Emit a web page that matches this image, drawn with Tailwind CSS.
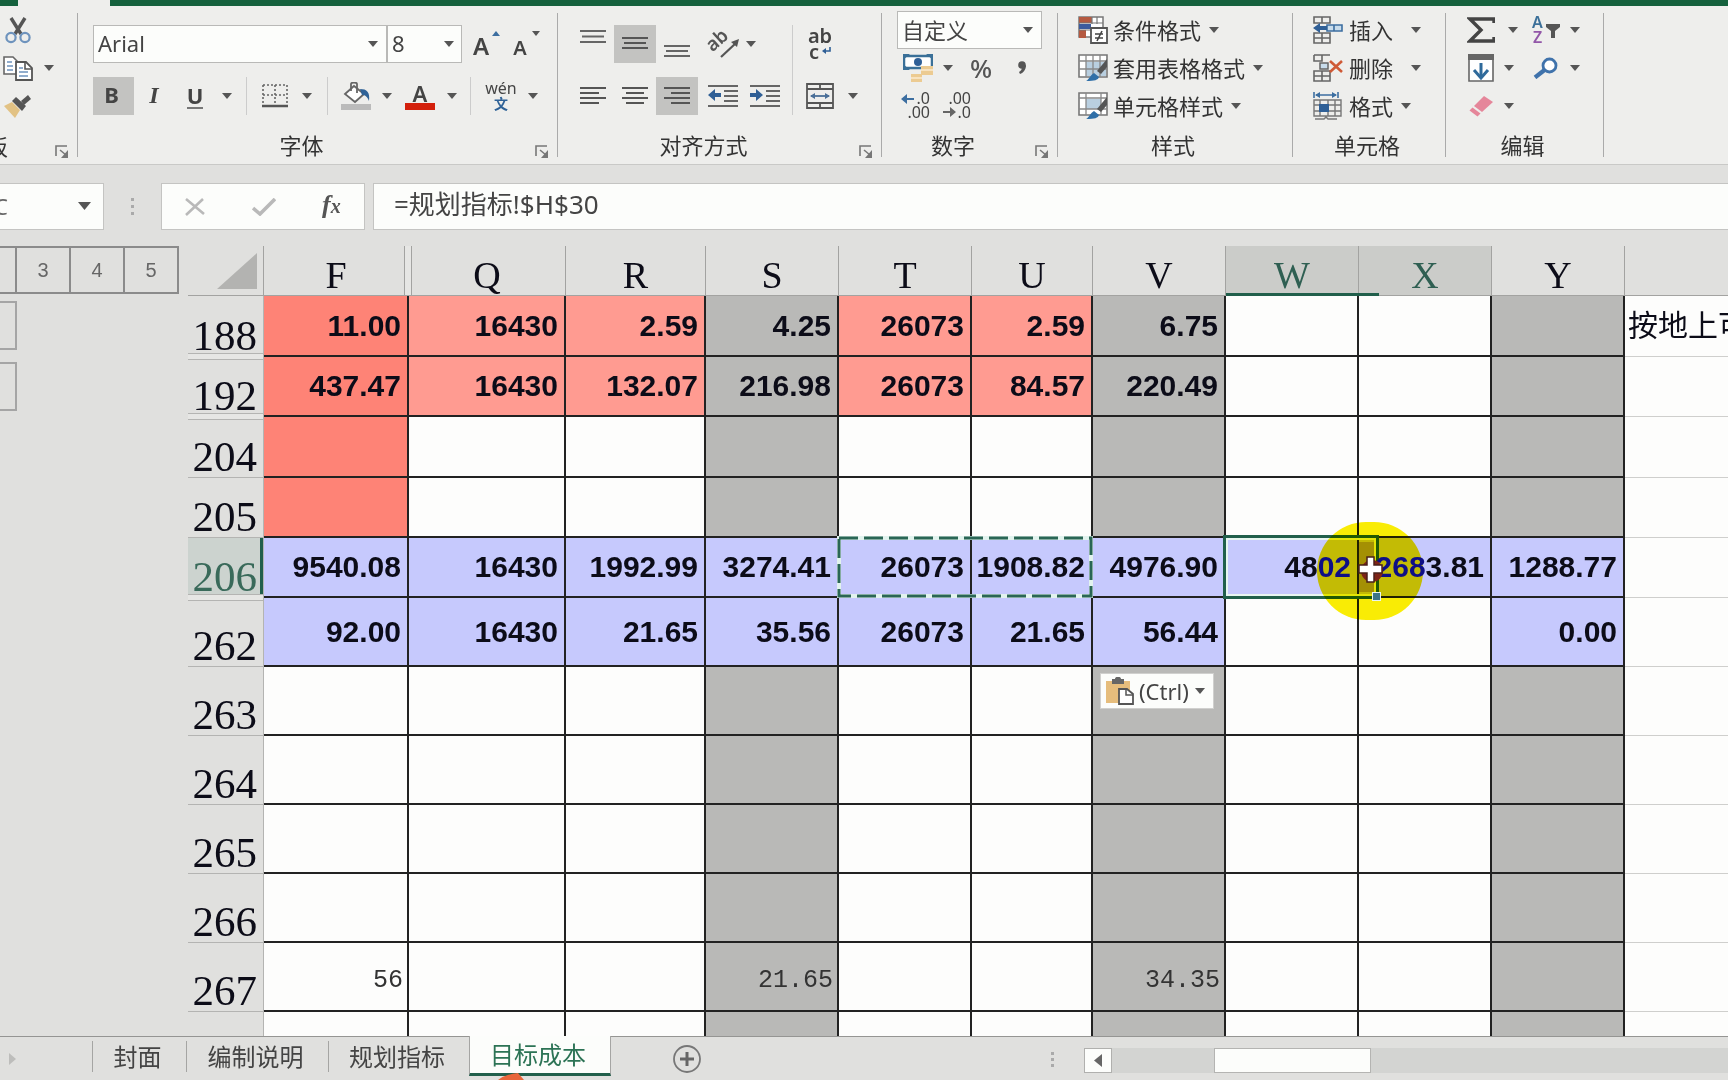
<!DOCTYPE html>
<html lang="zh-CN">
<head>
<meta charset="utf-8">
<title>目标成本</title>
<script src="https://cdn.jsdelivr.net/npm/@tailwindcss/browser@4"></script>
</head>
<body class="flex h-screen flex-col overflow-hidden bg-[#e0e0de] font-['Noto_Sans','Noto_Sans_CJK_SC',sans-serif] text-[22px] text-[#444]">

<svg class="hidden">
  <symbol id="caret" viewBox="0 0 10 6"><path d="M0 0h10L5 6z" fill="#555"/></symbol>
  <symbol id="launcher" viewBox="0 0 14 13"><path d="M1 11V1h11" fill="none" stroke="#777" stroke-width="1.6"/><path d="M5 5l6 5" stroke="#777" stroke-width="1.6"/><path d="M13 5v8H6z" fill="#777"/></symbol>
  <symbol id="stylebrush" viewBox="0 0 30 28"><path d="M29 5v8l-6 7-4-3z" fill="#555"/><path d="M8 27c3-1 4-6 8-8l5 4c-1 3-4 4-13 4z" fill="#2f6fa8"/></symbol>
</svg>

<!-- Title strip with the open ribbon tab -->
<div class="flex h-[6px] shrink-0 bg-[#15613d]"><div class="ml-[18px] w-[92px] bg-[#eeeeec]"></div></div>

<!-- Ribbon -->
<header class="flex h-[159px] shrink-0 border-b border-[#c9c9c7] bg-[#eeeeec] [&_button]:flex [&_button]:shrink-0 [&_button]:items-center [&_button]:justify-center">

  <section class="relative flex w-[77px] shrink-0 flex-col overflow-hidden pt-[5px]">
    <div class="flex h-[38px]"><button class="w-9" aria-label="剪切"><svg width="26" height="28" viewBox="0 0 26 28"><path d="M6 2l10 16M20 2L10 18" stroke="#555" stroke-width="3.4"/><circle cx="6" cy="21.500" r="4.600" fill="none" stroke="#6e93bd" stroke-width="2.200"/><circle cx="20" cy="21.500" r="4.600" fill="none" stroke="#6e93bd" stroke-width="2.200"/></svg></button></div>
    <div class="flex h-[38px]"><button class="w-9" aria-label="复制"><svg width="30" height="26" viewBox="0 0 30 26"><path d="M1 2h9l4 4v13H1z" fill="#fff" stroke="#666" stroke-width="1.600"/><path d="M4 7h5M4 11h6M4 15h6" stroke="#6e93bd" stroke-width="1.500"/><path d="M13 7h10l6 6v12H13z" fill="#fff" stroke="#555" stroke-width="1.800"/><path d="M22 7v7h7" fill="none" stroke="#555" stroke-width="1.600"/><path d="M16 13h4M16 17h9M16 21h9" stroke="#6e93bd" stroke-width="1.500"/></svg></button><button class="w-[26px]" aria-label="复制选项"><svg class="h-[6px] w-[10px]"><use href="#caret"/></svg></button></div>
    <div class="flex h-[38px]"><button class="w-9" aria-label="格式刷"><svg width="30" height="26" viewBox="0 0 30 26"><path d="M1 13l8-4 8 8-5 8z" fill="#e2c284"/><path d="M9 8l4-4 10 9-4 5z" fill="#555"/><path d="M18 8l7-6 3 4-7 6z" fill="#555"/></svg></button></div>
    <div class="mt-auto flex h-9 w-2 items-center justify-end whitespace-nowrap text-[#333]"><span class="shrink-0">剪贴板</span></div>
    <button class="absolute right-2 bottom-[6px]" aria-label="剪贴板设置"><svg class="h-[13px] w-[14px]"><use href="#launcher"/></svg></button>
  </section>
  <div class="my-[7px] w-px shrink-0 bg-[#aaa]"></div>

  <section class="relative flex w-[479px] shrink-0 flex-col pt-[19px]">
    <div class="flex h-[38px] pl-[15px]">
      <label class="relative block w-[294px]"><select aria-label="字体" class="h-full w-full appearance-none border border-[#b9b9b7] bg-[#fcfdfb] pb-[2px] pl-1"><option>Arial</option></select><svg class="pointer-events-none absolute top-4 right-[9px] h-[6px] w-[10px]"><use href="#caret"/></svg></label>
      <label class="relative block w-[75px]"><select aria-label="字号" class="h-full w-full appearance-none border border-[#b9b9b7] bg-[#fcfdfb] pb-[2px] pl-1"><option>8</option></select><svg class="pointer-events-none absolute top-4 right-2 h-[6px] w-[10px]"><use href="#caret"/></svg></label>
      <button class="relative w-[42px] pt-1 pr-1 text-2xl font-semibold" aria-label="增大字号">A<svg class="absolute top-[6px] right-1 h-[5px] w-[8px]" viewBox="0 0 8 5"><path d="M0 5h8L4 0z" fill="#3c6ea0"/></svg></button>
      <button class="relative w-[36px] pt-2 pr-1 text-xl font-semibold" aria-label="减小字号">A<svg class="absolute top-[6px] right-0 h-[5px] w-[8px]"><use href="#caret"/></svg></button>
    </div>
    <div class="mt-[14px] flex h-[38px] pl-[15px]">
      <button class="w-[41px] bg-[#c3c3c1] pr-1 pb-[3px] font-bold">B</button>
      <button class="w-10 pb-[2px] font-['Liberation_Serif',serif] text-2xl font-bold italic">I</button>
      <button class="w-[42px]"><span class="border-b-2 border-[#777] leading-6 font-bold">U</span></button>
      <button class="w-[22px]" aria-label="下划线选项"><svg class="h-[6px] w-[10px]"><use href="#caret"/></svg></button>
      <div class="mx-2 w-px bg-[#ccc]"></div>
      <button class="w-10" aria-label="边框"><svg width="26" height="24" viewBox="0 0 26 24"><path d="M1 1h24M1 11h24M1 1v20M13 1v20M25 1v20" stroke="#666" stroke-width="1.600" stroke-dasharray="2 2"/><path d="M0 22h26" stroke="#555" stroke-width="2.500"/></svg></button>
      <button class="w-6" aria-label="边框选项"><svg class="h-[6px] w-[10px]"><use href="#caret"/></svg></button>
      <div class="mx-2 w-px bg-[#ccc]"></div>
      <button class="w-10" aria-label="填充颜色"><svg width="30" height="28" viewBox="0 0 30 28"><path d="M4 12l9-8 10 8-9 8z" fill="#fff" stroke="#666" stroke-width="1.800"/><path d="M10 9V2c0-2 6-2 6 0v9" fill="none" stroke="#666" stroke-width="1.800"/><path d="M19 7c7 0 10 3 9 12-2-5-4-6-7-6z" fill="#2f6297"/><path d="M0 22h30v6H0z" fill="#bbb"/></svg></button>
      <button class="w-[22px]" aria-label="填充选项"><svg class="h-[6px] w-[10px]"><use href="#caret"/></svg></button>
      <button class="w-11 flex-col" aria-label="字体颜色"><span class="text-[22px] leading-5 font-semibold">A</span><span class="h-[7px] w-[30px] bg-[#d3200c]"></span></button>
      <button class="w-5" aria-label="字体颜色选项"><svg class="h-[6px] w-[10px]"><use href="#caret"/></svg></button>
      <div class="mx-2 w-px bg-[#ccc]"></div>
      <button class="w-11 flex-col"><span class="text-base leading-4">wén</span><span class="text-sm leading-4 font-bold text-[#2f6297]">文</span></button>
      <button class="w-5" aria-label="拼音选项"><svg class="h-[6px] w-[10px]"><use href="#caret"/></svg></button>
    </div>
    <div class="mt-auto flex h-9 items-center justify-center pr-8 pb-[2px] text-[#333]">字体</div>
    <button class="absolute right-2 bottom-[6px]" aria-label="字体设置"><svg class="h-[13px] w-[14px]"><use href="#launcher"/></svg></button>
  </section>
  <div class="my-[7px] w-px shrink-0 bg-[#aaa]"></div>

  <section class="relative flex w-[323px] shrink-0 flex-col pt-[19px]">
    <div class="flex h-[90px] pl-[14px]">
      <div class="flex flex-col gap-[14px]">
        <div class="flex h-[38px]">
          <button class="w-[42px]" aria-label="顶端对齐"><svg width="26" height="28" viewBox="0 0 26 28"><path d="M0 1h26M2 6.500h22M0 12h26" stroke="#666" stroke-width="2"/></svg></button>
          <button class="w-[42px] bg-[#c3c3c1]" aria-label="垂直居中"><svg width="26" height="28" viewBox="0 0 26 28"><path d="M0 8h26M2 13h22M0 18h26" stroke="#555" stroke-width="2"/></svg></button>
          <button class="w-[42px]" aria-label="底端对齐"><svg width="26" height="28" viewBox="0 0 26 28"><path d="M0 16h26M2 21h22M0 26h26" stroke="#666" stroke-width="2"/></svg></button>
          <button class="ml-1 w-[42px]" aria-label="方向"><svg class="overflow-visible" width="34" height="30" viewBox="0 0 34 30"><text x="4" y="23" transform="rotate(-42 6 20)" font-family="Noto Sans" font-size="19" font-weight="600" fill="#555">ab</text><path d="M15 28L30 14" stroke="#555" stroke-width="2.200"/><path d="M33 10l-2 8-6-5z" fill="#555"/></svg></button>
          <button class="w-[14px]" aria-label="方向选项"><svg class="h-[6px] w-[10px]"><use href="#caret"/></svg></button>
        </div>
        <div class="flex h-[38px]">
          <button class="w-[42px]" aria-label="左对齐"><svg width="26" height="20" viewBox="0 0 26 20"><path d="M0 2h26M0 7h19M0 12h26M0 17h19" stroke="#555" stroke-width="2"/></svg></button>
          <button class="w-[42px]" aria-label="居中"><svg width="26" height="20" viewBox="0 0 26 20"><path d="M0 2h26M4 7h18M0 12h26M4 17h18" stroke="#555" stroke-width="2"/></svg></button>
          <button class="w-[42px] bg-[#c3c3c1]" aria-label="右对齐"><svg width="26" height="20" viewBox="0 0 26 20"><path d="M0 2h26M7 7h19M0 12h26M7 17h19" stroke="#555" stroke-width="2"/></svg></button>
          <button class="ml-1 w-[42px]" aria-label="减少缩进量"><svg width="30" height="24" viewBox="0 0 30 24"><path d="M0 2h30M16 7h14M16 12h14M16 17h14M0 22h30" stroke="#666" stroke-width="1.800"/><path d="M0 11l7-6v4h6v4H7v4z" fill="#2f5f96"/></svg></button>
          <button class="w-[42px]" aria-label="增加缩进量"><svg width="30" height="24" viewBox="0 0 30 24"><path d="M0 2h30M16 7h14M16 12h14M16 17h14M0 22h30" stroke="#666" stroke-width="1.800"/><path d="M13 11L6 5v4H0v4h6v4z" fill="#2f5f96"/></svg></button>
        </div>
      </div>
      <div class="ml-[6px] w-px bg-[#ccc]"></div>
      <div class="flex flex-col gap-[14px]">
        <div class="flex h-[38px]"><button class="relative w-[54px] flex-col text-xl leading-4 font-semibold" aria-label="自动换行"><span>ab</span><span class="mr-3">c</span><svg class="absolute right-4 bottom-2 h-[8px] w-[9px]" viewBox="0 0 9 8"><path d="M8 0v4H3" fill="none" stroke="#2f5f96" stroke-width="1.600"/><path d="M0 4l4-3v6z" fill="#2f5f96"/></svg></button></div>
        <div class="flex h-[38px]"><button class="w-[54px]" aria-label="合并后居中"><svg width="28" height="26" viewBox="0 0 28 26"><path d="M1 1h26v24H1zM1 6h26M1 20h26M14 1v5M14 20v5" fill="none" stroke="#555" stroke-width="1.800"/><path d="M5 13h18" stroke="#4a6f98" stroke-width="1.800"/><path d="M4 13l5-3v6zM24 13l-5-3v6z" fill="#4a6f98"/></svg></button><button class="w-3" aria-label="合并选项"><svg class="h-[6px] w-[10px]"><use href="#caret"/></svg></button></div>
      </div>
    </div>
    <div class="mt-auto flex h-9 items-center justify-center pr-8 pb-[2px] text-[#333]">对齐方式</div>
    <button class="absolute right-2 bottom-[6px]" aria-label="对齐设置"><svg class="h-[13px] w-[14px]"><use href="#launcher"/></svg></button>
  </section>
  <div class="my-[7px] w-px shrink-0 bg-[#aaa]"></div>

  <section class="relative flex w-[175px] shrink-0 flex-col pt-[5px] pl-[15px]">
    <label class="relative block h-[38px] w-[145px]"><select aria-label="数字格式" class="h-full w-full appearance-none border border-[#b9b9b7] bg-[#fcfdfb] pl-1"><option>自定义</option></select><svg class="pointer-events-none absolute top-4 right-[9px] h-[6px] w-[10px]"><use href="#caret"/></svg></label>
    <div class="flex h-[38px]">
      <button class="w-[42px]" aria-label="会计数字格式"><svg width="30" height="28" viewBox="0 0 30 28"><path d="M1 2h28v12H1z" fill="#fff" stroke="#3a7098" stroke-width="2.500"/><path d="M0 0h7L0 6zM30 0h-7l7 6zM0 16v-6l7 6z" fill="#3a7098"/><circle cx="15" cy="8" r="4" fill="#2f5f96"/><path d="M18 12h12v9H18zM8 20h11v8H8z" fill="#eccb92"/><path d="M18 16h12M8 24h11" stroke="#fbeccf" stroke-width="1.300"/></svg></button>
      <button class="w-[18px]" aria-label="会计格式选项"><svg class="h-[6px] w-[10px]"><use href="#caret"/></svg></button>
      <button class="w-12 text-[26px] font-medium text-[#555]">%</button>
      <button class="w-[34px]" aria-label="千位分隔"><svg width="10" height="14" viewBox="0 0 10 14"><circle cx="5" cy="4" r="3.800" fill="#555"/><path d="M9 4c0 5-3 8-6 9l-1-2c2-1 3-3 3-5z" fill="#555"/></svg></button>
    </div>
    <div class="flex h-[38px]">
      <button class="w-[38px]" aria-label="增加小数位数"><svg class="overflow-visible" width="30" height="28" viewBox="0 0 30 28"><path d="M0 7l6-5v4h7v2H6v4z" fill="#3c6ea0"/><text x="29" y="12" text-anchor="end" font-family="Noto Sans" font-size="16" fill="#444">.0</text><text x="29" y="26" text-anchor="end" font-family="Noto Sans" font-size="16" fill="#444">.00</text></svg></button>
      <button class="w-11" aria-label="减少小数位数"><svg class="overflow-visible" width="30" height="28" viewBox="0 0 30 28"><path d="M14 20l-6-5v4H1v2h7v4z" fill="#666"/><text x="29" y="12" text-anchor="end" font-family="Noto Sans" font-size="16" fill="#444">.00</text><text x="29" y="26" text-anchor="end" font-family="Noto Sans" font-size="16" fill="#444">.0</text></svg></button>
    </div>
    <div class="mt-auto flex h-9 items-center justify-center pr-12 pb-[2px] text-[#333]">数字</div>
    <button class="absolute right-2 bottom-[6px]" aria-label="数字设置"><svg class="h-[13px] w-[14px]"><use href="#launcher"/></svg></button>
  </section>
  <div class="my-[7px] w-px shrink-0 bg-[#aaa]"></div>

  <section class="flex w-[234px] shrink-0 flex-col items-start pt-[5px] text-[#333]">
    <button class="ml-5 h-[38px]"><svg width="30" height="28" viewBox="0 0 30 28"><path d="M1 1h24v20H1z" fill="#fff" stroke="#777" stroke-width="1.500"/><path d="M1 1h13v6H1zM1 14h7v8H1z" fill="#b55a41"/><path d="M1 8h12v5H1z" fill="#3d5c9e"/><path d="M14 1v7M19 1v7M1 7h24M1 14h12" stroke="#777" stroke-width="1.200"/><path d="M13 12h16v15H13z" fill="#fff" stroke="#555" stroke-width="1.800"/><path d="M17 18h8M17 22h8M24 15l-5 10" stroke="#444" stroke-width="1.600"/></svg><span class="ml-[5px]">条件格式</span><svg class="ml-2 h-[6px] w-[10px]"><use href="#caret"/></svg></button>
    <button class="ml-5 h-[38px]"><svg width="30" height="28" viewBox="0 0 30 28"><path d="M1 1h28v22H1z" fill="#fff" stroke="#777" stroke-width="1.600"/><path d="M8 8h20v14H8z" fill="#b9cfe0"/><path d="M1 7h28M1 15h28M8 1v22M15 1v22M22 1v22" stroke="#888" stroke-width="1.300"/><use href="#stylebrush"/></svg><span class="ml-[5px]">套用表格格式</span><svg class="ml-2 h-[6px] w-[10px]"><use href="#caret"/></svg></button>
    <button class="ml-5 h-[38px]"><svg width="30" height="28" viewBox="0 0 30 28"><path d="M1 1h28v22H1z" fill="#fff" stroke="#777" stroke-width="1.600"/><path d="M8 7h15v10H8z" fill="#b9cfe0"/><path d="M1 6h28M1 17h28M8 1v22M23 1v22" stroke="#888" stroke-width="1.300"/><use href="#stylebrush"/></svg><span class="ml-[5px]">单元格样式</span><svg class="ml-2 h-[6px] w-[10px]"><use href="#caret"/></svg></button>
    <div class="mt-auto flex h-9 w-full items-center justify-center pr-1 pb-[2px]">样式</div>
  </section>
  <div class="my-[7px] w-px shrink-0 bg-[#aaa]"></div>

  <section class="flex w-[152px] shrink-0 flex-col items-start pt-[5px] text-[#333]">
    <button class="ml-5 h-[38px]"><svg width="30" height="28" viewBox="0 0 30 28"><path d="M1 1h16v6H1zM9 1v6M1 17h16v10H1zM9 17v10M1 22h16" fill="none" stroke="#666" stroke-width="1.600"/><path d="M14 9h15v6H14zM21 9v6" fill="#c8dcec" stroke="#3c6ea0" stroke-width="1.600"/><path d="M0 12l7-5v3h7v4H7v3z" fill="#2f5f96"/></svg><span class="ml-[6px]">插入</span><svg class="ml-[18px] h-[6px] w-[10px]"><use href="#caret"/></svg></button>
    <button class="ml-5 h-[38px]"><svg width="30" height="28" viewBox="0 0 30 28"><path d="M1 1h16M1 1v6h8V1M1 17h16v10H1zM9 17v10M1 22h16" fill="none" stroke="#666" stroke-width="1.600"/><path d="M7 9h8v6H7z" fill="#c8dcec" stroke="#666" stroke-width="1.500"/><path d="M17 7l12 11M29 7L17 18" stroke="#cf5a36" stroke-width="2.600"/></svg><span class="ml-[6px]">删除</span><svg class="ml-[18px] h-[6px] w-[10px]"><use href="#caret"/></svg></button>
    <button class="ml-5 h-[38px]"><svg width="30" height="28" viewBox="0 0 30 28"><path d="M1 0v6M25 0v6M3 3h20" stroke="#3c6ea0" stroke-width="1.600"/><path d="M2 3l5-3v6zM24 3l-5-3v6z" fill="#3c6ea0"/><path d="M1 8h27v16H1zM1 13h27M1 19h27M7 8v16M15 8v16M22 8v16M2 27h9l2-2 2 2h9" fill="none" stroke="#777" stroke-width="1.400"/><path d="M6 12h10v8H6z" fill="#2f5f96"/></svg><span class="ml-[6px]">格式</span><svg class="ml-2 h-[6px] w-[10px]"><use href="#caret"/></svg></button>
    <div class="mt-auto flex h-9 w-full items-center justify-center pr-1 pb-[2px]">单元格</div>
  </section>
  <div class="my-[7px] w-px shrink-0 bg-[#aaa]"></div>

  <section class="flex w-[157px] shrink-0 flex-col pt-[5px] text-[#333]">
    <div class="flex h-[38px] pl-[14px]">
      <button class="w-[42px]" aria-label="自动求和"><svg width="28" height="26" viewBox="0 0 28 26"><path d="M27 6V2H3l11 11L3 24h24v-4" fill="none" stroke="#444" stroke-width="3.400"/></svg></button>
      <button class="w-[22px]" aria-label="求和选项"><svg class="h-[6px] w-[10px]"><use href="#caret"/></svg></button>
      <button class="w-11" aria-label="排序和筛选"><svg class="overflow-visible" width="30" height="28" viewBox="0 0 30 28"><text x="1" y="12" font-family="Noto Sans" font-size="16" font-weight="600" fill="#3c7099">A</text><text x="2" y="27" font-family="Noto Sans" font-size="16" font-weight="600" fill="#9257a8">Z</text><path d="M15 8h14v3l-5 4v7h-4v-7l-5-4z" fill="#555"/></svg></button>
      <button class="w-[14px]" aria-label="排序选项"><svg class="h-[6px] w-[10px]"><use href="#caret"/></svg></button>
    </div>
    <div class="flex h-[38px] pl-[14px]">
      <button class="w-[42px]" aria-label="填充"><svg width="26" height="28" viewBox="0 0 26 28"><path d="M1 1h24v26H1z" fill="#fff" stroke="#666" stroke-width="1.600"/><path d="M0 0h26v6H0z" fill="#666"/><path d="M13 9v13" stroke="#2f6a9b" stroke-width="3"/><path d="M6 16l7 8 7-8" fill="none" stroke="#2f6a9b" stroke-width="3"/></svg></button>
      <button class="w-[22px] pr-2" aria-label="填充方式"><svg class="h-[6px] w-[10px]"><use href="#caret"/></svg></button>
      <button class="w-11" aria-label="查找和选择"><svg width="26" height="22" viewBox="0 0 26 22"><circle cx="16.500" cy="8.500" r="6.500" fill="#fff" stroke="#3f72ab" stroke-width="2.800"/><path d="M11.500 13L2 20.500" stroke="#3f72ab" stroke-width="4.200"/></svg></button>
      <button class="w-[14px]" aria-label="查找选项"><svg class="h-[6px] w-[10px]"><use href="#caret"/></svg></button>
    </div>
    <div class="flex h-[38px] pl-[14px]">
      <button class="w-[42px]" aria-label="清除"><svg width="26" height="22" viewBox="0 0 26 22"><path d="M16 1l9 6-11 10-8-6z" fill="#e5869a"/><path d="M4.500 12.500l8 6-3 3-8-6z" fill="#e5869a"/></svg></button>
      <button class="w-[22px] pr-2" aria-label="清除选项"><svg class="h-[6px] w-[10px]"><use href="#caret"/></svg></button>
    </div>
    <div class="mt-auto flex h-9 items-center justify-center pr-1 pb-[2px]">编辑</div>
  </section>
  <div class="my-[7px] w-px shrink-0 bg-[#aaa]"></div>
</header>

<!-- Formula bar -->
<div class="flex h-[65px] shrink-0 pt-[18px]">
  <div class="relative h-[47px] w-[104px] shrink-0 overflow-hidden border border-l-0 border-[#c4c4c2] bg-[#fcfdfb]">
    <div class="flex h-full w-2 items-center justify-end text-[#666]"><span class="shrink-0">C</span></div>
    <button class="absolute top-[18px] right-3" aria-label="名称列表"><svg class="h-[8px] w-[13px]"><use href="#caret"/></svg></button>
  </div>
  <div class="flex h-[47px] w-[57px] shrink-0 flex-col items-center justify-center gap-1"><i class="size-[3px] bg-[#aaa]"></i><i class="size-[3px] bg-[#aaa]"></i><i class="size-[3px] bg-[#aaa]"></i></div>
  <div class="flex h-[47px] w-[204px] shrink-0 items-center justify-around border border-[#c4c4c2] bg-[#fcfdfb]">
    <button aria-label="取消"><svg width="20" height="18" viewBox="0 0 20 18"><path d="M1 1l18 15M18 1L1 17" stroke="#b9b9b9" stroke-width="2.600"/></svg></button>
    <button aria-label="输入"><svg width="24" height="18" viewBox="0 0 24 18"><path d="M1 10l7 6L23 1" fill="none" stroke="#b9b9b9" stroke-width="3.600"/></svg></button>
    <button class="pb-1 font-['Liberation_Serif',serif] text-[26px] font-bold text-[#555] italic" aria-label="插入函数">f<span class="text-xl">x</span></button>
  </div>
  <input aria-label="公式" value="=规划指标!$H$30" class="ml-2 h-[47px] min-w-0 flex-1 border border-r-0 border-[#c4c4c2] bg-[#fcfdfb] pb-[7px] pl-5 text-[26px]">
</div>

<!-- Worksheet -->
<main class="flex min-h-0 flex-1 overflow-hidden pt-4">
  <aside class="w-[188px] shrink-0 font-['Liberation_Sans',sans-serif] text-xl text-[#666]">
    <div class="flex h-12">
      <div class="w-[17px] border-2 border-l-0 border-[#8b8b8b]"></div>
      <button class="w-[54px] border-2 border-l-0 border-[#8b8b8b]">3</button>
      <button class="w-[54px] border-2 border-l-0 border-[#8b8b8b]">4</button>
      <button class="w-[54px] border-2 border-l-0 border-[#8b8b8b]">5</button>
    </div>
    <div class="mt-[7px] h-[49px] w-[17px] border-2 border-l-0 border-[#a5a5a5]"></div>
    <div class="mt-3 h-[49px] w-[17px] border-2 border-l-0 border-[#a5a5a5]"></div>
  </aside>

  <div class="min-w-0 flex-1 overflow-hidden">
  <table class="w-full table-fixed border-separate border-spacing-0 font-['Liberation_Sans','Noto_Sans_CJK_SC',sans-serif] text-[30px] leading-9 font-bold text-[#0c0c18] [&_tbody_th]:relative [&_tbody_th]:border-r [&_tbody_th]:border-b [&_tbody_th]:border-[#b4b4b2] [&_tbody_th]:p-0 [&_tbody_th]:pr-[6px] [&_tbody_th]:text-right [&_tbody_th]:align-bottom [&_tbody_th]:font-['Liberation_Serif',serif] [&_tbody_th]:text-[43px] [&_tbody_th]:leading-10 [&_tbody_th]:font-normal [&_td]:border-r-2 [&_td]:border-b-2 [&_td]:border-[#222] [&_td]:py-0 [&_td]:pr-[6px] [&_td]:pl-0 [&_td]:text-right [&_td:last-child]:overflow-hidden [&_td:last-child]:border-r-0 [&_td:last-child]:border-b [&_td:last-child]:border-[#cfcfcd] [&_td:last-child]:pl-[3px] [&_td:last-child]:text-left [&_td:last-child]:font-normal [&_td:last-child]:whitespace-nowrap [&_thead_th]:relative [&_thead_th]:border-r [&_thead_th]:border-b [&_thead_th]:border-[#a3a3a1] [&_thead_th]:p-0 [&_thead_th]:pt-2 [&_thead_th]:font-['Liberation_Serif',serif] [&_thead_th]:text-[38px] [&_thead_th]:leading-10 [&_thead_th]:font-normal">
    <colgroup><col class="w-[76px]"><col class="w-[145px]"><col class="w-[157px]"><col class="w-[140px]"><col class="w-[133px]"><col class="w-[133px]"><col class="w-[121px]"><col class="w-[133px]"><col class="w-[133px]"><col class="w-[133px]"><col class="w-[133px]"><col></colgroup>
    <thead>
      <tr class="h-[50px]">
        <th><svg class="absolute right-[6px] bottom-[6px]" width="40" height="36" viewBox="0 0 40 36"><path d="M40 0v36H0z" fill="#b3b3b1"/></svg></th>
        <th scope="col">F<span class="absolute top-0 -right-1 bottom-0 z-10 w-2 border-x border-[#a3a3a1] bg-[#e6e6e4]"></span></th>
        <th scope="col">Q</th><th scope="col">R</th><th scope="col">S</th><th scope="col">T</th><th scope="col">U</th><th scope="col">V</th>
        <th scope="col" class="bg-[#cbccc9] text-[#2f5f52]">W<span class="absolute -bottom-px left-0 z-10 h-[3px] w-[153px] bg-[#215f4b]"></span></th>
        <th scope="col" class="bg-[#cbccc9] text-[#2f5f52]">X</th>
        <th scope="col">Y</th><th class="border-r-0!"></th>
      </tr>
    </thead>
    <tbody class="bg-[#fdfdfc] [&_th]:bg-[#e0e0de]">
      <tr class="h-[61px]"><th scope="row">188<span class="absolute inset-x-0 -bottom-1 z-10 h-[7px] border-y border-[#b4b4b2] bg-[#e6e6e4]"></span></th><td class="bg-[#fe8376]">11.00</td><td class="bg-[#ff9b91]">16430</td><td class="bg-[#ff9b91]">2.59</td><td class="bg-[#b9b9b7]">4.25</td><td class="bg-[#ff9b91]">26073</td><td class="bg-[#ff9b91]">2.59</td><td class="bg-[#b9b9b7]">6.75</td><td></td><td></td><td class="bg-[#b9b9b7]"></td><td>按地上可</td></tr>
      <tr class="h-[60px]"><th scope="row">192<span class="absolute inset-x-0 -bottom-1 z-10 h-[7px] border-y border-[#b4b4b2] bg-[#e6e6e4]"></span></th><td class="bg-[#fe8376]">437.47</td><td class="bg-[#ff9b91]">16430</td><td class="bg-[#ff9b91]">132.07</td><td class="bg-[#b9b9b7]">216.98</td><td class="bg-[#ff9b91]">26073</td><td class="bg-[#ff9b91]">84.57</td><td class="bg-[#b9b9b7]">220.49</td><td></td><td></td><td class="bg-[#b9b9b7]"></td><td></td></tr>
      <tr class="h-[61px]"><th scope="row">204</th><td class="bg-[#fe8376]"></td><td></td><td></td><td class="bg-[#b9b9b7]"></td><td></td><td></td><td class="bg-[#b9b9b7]"></td><td></td><td></td><td class="bg-[#b9b9b7]"></td><td></td></tr>
      <tr class="h-[60px]"><th scope="row">205</th><td class="bg-[#fe8376]"></td><td></td><td></td><td class="bg-[#b9b9b7]"></td><td></td><td></td><td class="bg-[#b9b9b7]"></td><td></td><td></td><td class="bg-[#b9b9b7]"></td><td></td></tr>
      <tr class="h-[60px] [&_td]:bg-[#c6c9fd] [&_td:last-child]:bg-transparent">
        <th scope="row" class="text-[#3d6b5c]"><span class="absolute inset-0 border-r-3 border-[#215f4b] bg-[#215f4b]/10"></span>206<span class="absolute inset-x-0 -bottom-1 z-10 h-[7px] border-y border-[#b4b4b2] bg-[#e6e6e4]"></span></th>
        <td>9540.08</td><td>16430</td><td>1992.99</td><td>3274.41</td>
        <td class="relative">26073<svg class="pointer-events-none absolute -top-[2px] -left-[2px] z-10" width="256" height="62"><rect x="2" y="2" width="252" height="58" fill="none" stroke="#e2f3ee" stroke-width="4"/><rect x="2" y="2" width="252" height="58" fill="none" stroke="#2a6655" stroke-width="3" stroke-dasharray="19 6"/></svg></td>
        <td>1908.82</td><td>4976.90</td>
        <td class="relative">48<span class="relative z-30 text-[#0e0e86]">02</span><span class="absolute -top-[3px] -left-[3px] z-10 h-[64px] w-[156px] border-3 border-[#215f4b]"><span class="block h-full border-2 border-[#e8f5f0]"></span></span>
          <span class="absolute -top-4 left-[91px] z-20 h-[98px] w-[106px] rounded-full bg-[#fbee05] mix-blend-multiply"></span>
          <span class="absolute top-1 left-[133px] z-10 h-[50px] w-[15px] bg-[#a79a9a]"></span>
          <span class="absolute -bottom-[5px] left-[146px] z-30 size-[9px] border border-[#e8f5f0] bg-[#3c7586]"></span>
          <svg class="absolute top-[18px] left-[132px] z-40" width="26" height="28" viewBox="0 0 26 28"><circle cx="14" cy="15" r="11" fill="#7e2317"/><path d="M9 1h7v8h8v8h-8v9H9v-9H1V9h8z" fill="#fff" stroke="#4a201a" stroke-width="1.500"/></svg></td>
        <td><span class="relative z-30 text-[#0e0e86]">268</span>3.81</td><td>1288.77</td><td></td></tr>
      <tr class="h-[69px] [&_td]:bg-[#c6c9fd] [&_td:last-child]:bg-transparent"><th scope="row">262</th><td>92.00</td><td>16430</td><td>21.65</td><td>35.56</td><td>26073</td><td>21.65</td><td>56.44</td><td class="bg-[#fdfdfc]!"></td><td class="bg-[#fdfdfc]!"></td><td>0.00</td><td></td></tr>
      <tr class="h-[69px]"><th scope="row">263</th><td></td><td></td><td></td><td class="bg-[#b9b9b7]"></td><td></td><td></td><td class="relative bg-[#b9b9b7]"><button class="absolute top-[6px] left-[7px] flex h-9 w-[114px] items-center border border-[#d0d0ce] bg-[#fcfdfb] pl-1 font-['Noto_Sans',sans-serif] text-[22px] font-normal text-[#444]"><svg width="30" height="28" viewBox="0 0 30 28"><path d="M1 4h24v22H1z" fill="#e6bd7c"/><path d="M7 2h3c0-3 6-3 6 0h3v5H7z" fill="#666"/><path d="M14 12h8l6 5v10H14z" fill="#fff" stroke="#555" stroke-width="1.800"/><path d="M21 12v6h7" fill="none" stroke="#555" stroke-width="1.500"/></svg><span class="ml-1">(Ctrl)</span><svg class="ml-[6px] h-[6px] w-[10px]"><use href="#caret"/></svg></button></td><td></td><td></td><td class="bg-[#b9b9b7]"></td><td></td></tr>
      <tr class="h-[69px]"><th scope="row">264</th><td></td><td></td><td></td><td class="bg-[#b9b9b7]"></td><td></td><td></td><td class="bg-[#b9b9b7]"></td><td></td><td></td><td class="bg-[#b9b9b7]"></td><td></td></tr>
      <tr class="h-[69px]"><th scope="row">265</th><td></td><td></td><td></td><td class="bg-[#b9b9b7]"></td><td></td><td></td><td class="bg-[#b9b9b7]"></td><td></td><td></td><td class="bg-[#b9b9b7]"></td><td></td></tr>
      <tr class="h-[69px]"><th scope="row">266</th><td></td><td></td><td></td><td class="bg-[#b9b9b7]"></td><td></td><td></td><td class="bg-[#b9b9b7]"></td><td></td><td></td><td class="bg-[#b9b9b7]"></td><td></td></tr>
      <tr class="h-[69px] font-['Liberation_Mono',monospace] text-[25px] font-normal text-[#333] [&_td]:pt-2! [&_td]:pr-1!"><th scope="row" class="text-[#0c0c18]">267</th><td>56</td><td></td><td></td><td class="bg-[#b9b9b7]">21.65</td><td></td><td></td><td class="bg-[#b9b9b7]">34.35</td><td></td><td></td><td class="bg-[#b9b9b7]"></td><td></td></tr>
      <tr class="h-[69px]"><th></th><td></td><td></td><td></td><td class="bg-[#b9b9b7]"></td><td></td><td></td><td class="bg-[#b9b9b7]"></td><td></td><td></td><td class="bg-[#b9b9b7]"></td><td></td></tr>
    </tbody>
  </table>
  </div>
</main>

<!-- Sheet tabs and horizontal scroll bar -->
<footer class="flex h-11 shrink-0 border-t border-[#959593] text-2xl text-[#444]">
  <button class="flex w-[92px] items-center pl-[9px]" aria-label="下一张"><svg width="7" height="12" viewBox="0 0 7 12"><path d="M0 0l7 6-7 6z" fill="#bdbdbb"/></svg></button>
  <nav class="flex pb-1 [&_a]:flex [&_a]:items-center [&_a]:justify-center [&_a]:pr-1">
    <a href="#s1" class="my-1 w-[94px] border-l border-[#a5a5a3]">封面</a>
    <a href="#s2" class="my-1 w-[142px] border-l border-[#a5a5a3]">编制说明</a>
    <a href="#s3" class="my-1 w-[141px] border-l border-[#a5a5a3]">规划指标</a>
    <a href="#s4" class="relative -mt-px w-[142px] border-x border-b-3 border-x-[#a5a5a3] border-b-[#215f4b] bg-[#fcfdfb] text-[#2c7355]">目标成本<svg class="absolute -bottom-[7px] left-7" width="26" height="7" viewBox="0 0 26 7"><path d="M0 7Q8 1 20 0l6 7z" fill="#e8653a"/></svg></a>
  </nav>
  <button class="ml-[61px] flex items-center" aria-label="新工作表"><svg width="30" height="30" viewBox="0 0 30 30"><circle cx="15" cy="15" r="13" fill="none" stroke="#777" stroke-width="1.800"/><path d="M15 8v14M8 15h14" stroke="#666" stroke-width="3"/></svg></button>
  <div class="ml-auto flex w-[677px] items-start pt-[11px]">
    <div class="flex h-6 w-[33px] flex-col justify-between pt-1 pb-[5px]"><i class="h-[3px] w-[3px] bg-[#aaa]"></i><i class="h-[3px] w-[3px] bg-[#aaa]"></i><i class="h-[3px] w-[3px] bg-[#aaa]"></i></div>
    <button class="flex h-[25px] w-7 items-center justify-center border border-[#b0b0ae] bg-[#fcfdfb]" aria-label="向左滚动"><svg width="8" height="13" viewBox="0 0 8 13"><path d="M8 0v13L0 6.500z" fill="#666"/></svg></button>
    <div class="h-[25px] flex-1 bg-[#d3d4d2] pl-[102px]"><div class="h-full w-[157px] border border-[#b4b4b2] bg-[#fcfdfb]"></div></div>
  </div>
</footer>
</body>
</html>
